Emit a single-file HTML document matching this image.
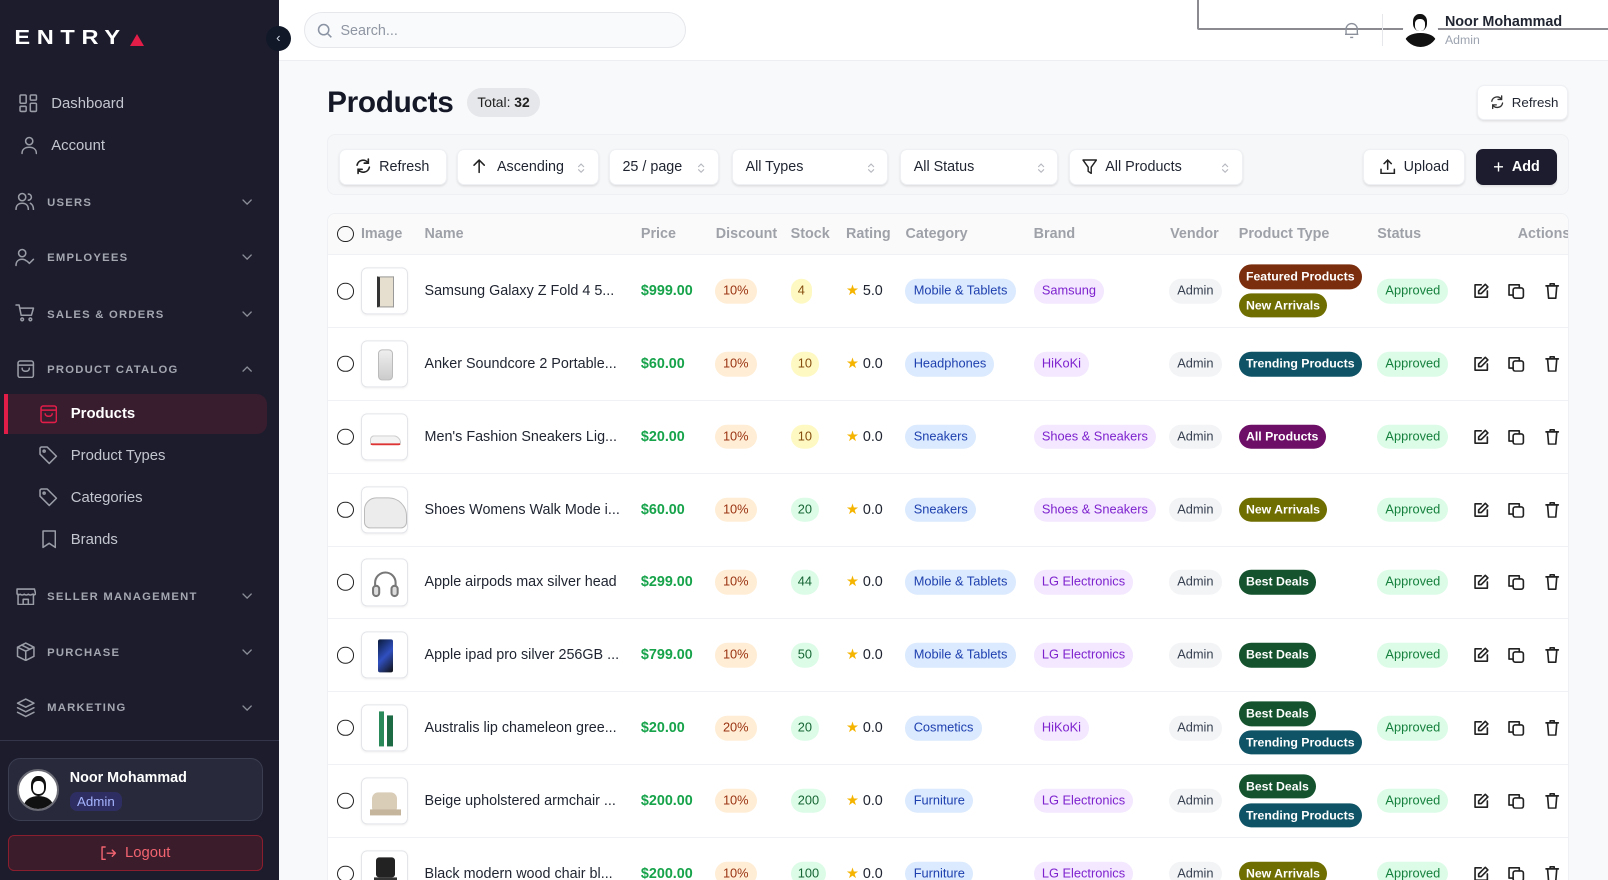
<!DOCTYPE html>
<html style="overflow:hidden"><head><meta charset="utf-8">
<style>
html{zoom:1.02551;overflow:hidden}
*{box-sizing:border-box;margin:0;padding:0}
body{width:1568px;height:858px;overflow:hidden;background:#f8f9fb;font-family:"Liberation Sans",Arial,sans-serif;position:relative;color:#1f2430}
.a{position:absolute}
.sb{left:0;top:0;width:272px;height:858px;background:#1c1c2d}
.logo{left:14px;top:25px;color:#fff;font-weight:900;font-size:23px;letter-spacing:6.5px;transform:scaleY(.85);transform-origin:top left}
.nav{color:#c4c6cf;font-size:14.5px;left:50px}
.sec{color:#a4a6b0;font-size:11px;font-weight:700;letter-spacing:1.2px;left:46px}
.sub{color:#c4c6cf;font-size:14.5px;left:69px}
.ic{stroke:#9a9ca6;fill:none;stroke-width:1.5;stroke-linecap:round;stroke-linejoin:round}
.chev{position:absolute;left:236px}
.hdr{left:272px;top:0;width:1296px;height:59px;background:#fff;border-bottom:1px solid #eceef2}
.btn{background:#fff;border-radius:7px;box-shadow:0 1px 2px rgba(0,0,0,.1);border:1px solid #eef0f3;font-size:14px;color:#1f2430;display:flex;align-items:center;padding-left:14px;height:35px;top:145px}
.ud{position:absolute;right:12px;top:12px}
.tbl{left:319px;top:208px;width:1211px;height:700px;background:#fff;border:1px solid #eef0f3;border-radius:8px;overflow:hidden}
.th{position:absolute;top:11px;font-size:14px;font-weight:700;color:#9ea1a8}
.row{position:absolute;left:0;width:1211px;height:71px;border-top:1px solid #eff1f4}
.row>*{position:absolute;top:50%;transform:translateY(-50%)}
.cb{left:9px;width:16px;height:16px;border:1.5px solid #222;border-radius:50%}
.im{left:32px;width:46px;height:46px;border:1px solid #e3e5e9;border-radius:6px;background:#fff;box-shadow:0 1px 2px rgba(0,0,0,.06)}
.nm{left:94px;font-size:14px;color:#1f2430}
.pr{left:305px;font-size:14px;font-weight:700;color:#16a34a}
.p{font-size:12.5px;border-radius:12px;height:24px;line-height:24px;padding:0 8px;white-space:nowrap}
.ds{left:377px;background:#ffedd5;color:#9a3412}
.sty{background:#fef9c3;color:#854d0e;padding:0 7px}
.stg{background:#dcfce7;color:#166534;padding:0 7px}
.rt{left:505px;font-size:14px;color:#1f2430}
.rt b{color:#f5b400;font-weight:400}
.ct{left:563px;background:#dbeafe;color:#1e40af}
.br{left:688px;background:#f3e8ff;color:#7e22ce}
.vd{left:820px;background:#f3f4f6;color:#374151}
.ptw{left:888px;display:flex;flex-direction:column;gap:4px;align-items:flex-start}
.pt{font-size:12px;font-weight:700;color:#fff;border-radius:12px;height:24px;line-height:24px;padding:0 7px;white-space:nowrap}
.fp{background:#7a2e0e}.na{background:#6f6e00}.tp{background:#0f5466}.ap{background:#6d0f66}.bd{background:#14532d}
.st{left:1023px;background:#dcfce7;color:#15803d}
.ac{stroke:#222;fill:none;stroke-width:1.6;stroke-linecap:round;stroke-linejoin:round}
</style></head><body>
<svg width="0" height="0" style="position:absolute"><defs>
<symbol id="cd" viewBox="0 0 10 6"><path d="M1 1l4 4 4-4" fill="none" stroke="#8a8c96" stroke-width="1.3" stroke-linecap="round"/></symbol>
<symbol id="cu" viewBox="0 0 10 6"><path d="M1 5l4-4 4 4" fill="none" stroke="#8a8c96" stroke-width="1.3" stroke-linecap="round"/></symbol>
<symbol id="ud" viewBox="0 0 8 12"><path d="M1.5 4.5L4 2l2.5 2.5M1.5 7.5L4 10l2.5-2.5" fill="none" stroke="#b5b8bf" stroke-width="1.1" stroke-linecap="round"/></symbol>
</defs></svg>
<div class="a sb">
 <div class="a logo">ENTRY</div>
 <div class="a" style="left:127px;top:33px;width:0;height:0;border-left:7px solid transparent;border-right:7px solid transparent;border-bottom:12px solid #e11d48"></div>
 <svg class="a ic" style="left:19px;top:92px" width="18" height="18" viewBox="0 0 18 18"><rect x="1" y="1" width="6" height="8" rx="1"/><rect x="11" y="1" width="6" height="5" rx="1"/><rect x="1" y="12" width="6" height="5" rx="1"/><rect x="11" y="9" width="6" height="8" rx="1"/></svg>
 <div class="a nav" style="top:94px">Dashboard</div>
 <svg class="a ic" style="left:20px;top:133px" width="16" height="18" viewBox="0 0 16 18"><circle cx="8" cy="5" r="3.5"/><path d="M1 17c0-4 3-6 7-6s7 2 7 6"/></svg>
 <div class="a nav" style="top:135px">Account</div>

 <svg class="a ic" style="left:15px;top:187px" width="20" height="18" viewBox="0 0 20 18"><circle cx="7" cy="5" r="3.5"/><path d="M1 17c0-4 2.5-6 6-6s6 2 6 6M13 2a3 3 0 010 6M15 11c2 1 3 3 3 6"/></svg>
 <div class="a sec" style="top:192px">USERS</div>
 <svg class="chev" style="top:194px" width="10" height="6"><use href="#cd"/></svg>

 <svg class="a ic" style="left:15px;top:242px" width="20" height="18" viewBox="0 0 20 18"><circle cx="7" cy="5" r="3.5"/><path d="M1 17c0-4 2.5-6 6-6 2 0 3 .5 4 1.5M12 13l2 2 4-4"/></svg>
 <div class="a sec" style="top:246px">EMPLOYEES</div>
 <svg class="chev" style="top:248px" width="10" height="6"><use href="#cd"/></svg>

 <svg class="a ic" style="left:15px;top:296px" width="20" height="18" viewBox="0 0 20 18"><path d="M1 1h3l2 10h10l2-7H5"/><circle cx="7" cy="15" r="1.3"/><circle cx="15" cy="15" r="1.3"/></svg>
 <div class="a sec" style="top:301px">SALES &amp; ORDERS</div>
 <svg class="chev" style="top:303px" width="10" height="6"><use href="#cd"/></svg>

 <svg class="a ic" style="left:17px;top:351px" width="17" height="18" viewBox="0 0 17 18"><rect x="1" y="1" width="15" height="16" rx="2"/><path d="M1 5h15M5 8c0 2 1.5 3 3.5 3s3.5-1 3.5-3"/></svg>
 <div class="a sec" style="top:355px">PRODUCT CATALOG</div>
 <svg class="chev" style="top:357px" width="10" height="6"><use href="#cu"/></svg>

 <div class="a" style="left:4px;top:384px;width:256px;height:39px;background:#371d2e;border-radius:0 10px 10px 0"></div>
 <div class="a" style="left:4px;top:384px;width:4px;height:39px;background:#e11d48"></div>
 <svg class="a" style="left:39px;top:395px" width="17" height="18" viewBox="0 0 17 18" fill="none" stroke="#e11d48" stroke-width="1.5"><rect x="1" y="1" width="15" height="16" rx="2"/><path d="M1 5h15M5 8c0 2 1.5 3 3.5 3s3.5-1 3.5-3"/></svg>
 <div class="a sub" style="top:396px;color:#fff;font-weight:700">Products</div>
 <svg class="a ic" style="left:38px;top:435px" width="19" height="19" viewBox="0 0 19 19"><path d="M1 2v6l9 9 7-7-9-9H2z"/><circle cx="5" cy="5" r="1"/></svg>
 <div class="a sub" style="top:437px">Product Types</div>
 <svg class="a ic" style="left:38px;top:476px" width="19" height="19" viewBox="0 0 19 19"><path d="M1 2v6l9 9 7-7-9-9H2z"/><circle cx="5" cy="5" r="1"/></svg>
 <div class="a sub" style="top:478px">Categories</div>
 <svg class="a ic" style="left:41px;top:517px" width="14" height="18" viewBox="0 0 14 18"><path d="M1 1h12v16l-6-4-6 4z"/></svg>
 <div class="a sub" style="top:519px">Brands</div>

 <svg class="a ic" style="left:16px;top:571px" width="19" height="19" viewBox="0 0 19 19"><path d="M2 8v10h15V8M1 3h17l1 4c0 2-2 2-3 1-1 1-3 1-4 0-1 1-3 1-4 0-1 1-3 1-4 0-1 1-3 1-3-1zM7 18v-5h5v5"/></svg>
 <div class="a sec" style="top:576px">SELLER MANAGEMENT</div>
 <svg class="chev" style="top:578px" width="10" height="6"><use href="#cd"/></svg>
 <svg class="a ic" style="left:16px;top:626px" width="19" height="19" viewBox="0 0 19 19"><path d="M9.5 1l8 4v9l-8 4-8-4V5zM1.5 5l8 4 8-4M9.5 9v9M5.5 3l8 4"/></svg>
 <div class="a sec" style="top:631px">PURCHASE</div>
 <svg class="chev" style="top:633px" width="10" height="6"><use href="#cd"/></svg>
 <svg class="a ic" style="left:16px;top:681px" width="19" height="19" viewBox="0 0 19 19"><path d="M9.5 1l8 4-8 4-8-4zM1.5 9.5l8 4 8-4M1.5 14l8 4 8-4"/></svg>
 <div class="a sec" style="top:685px">MARKETING</div>
 <svg class="chev" style="top:687px" width="10" height="6"><use href="#cd"/></svg>

 <div class="a" style="left:0;top:722px;width:272px;height:1px;background:#34354a"></div>
 <div class="a" style="left:8px;top:739px;width:248px;height:62px;background:#282a3b;border:1px solid #3b3d50;border-radius:12px"></div>
 <div class="a" style="left:17px;top:750px;width:41px;height:41px;border-radius:50%;background:#fff;border:2px solid #6b6b75;overflow:hidden">
  <div class="a" style="left:11px;top:5px;width:15px;height:19px;border-radius:45%;background:#111"></div>
  <div class="a" style="left:13px;top:10px;width:11px;height:12px;border-radius:40%;background:#fff"></div>
  <div class="a" style="left:4px;top:24px;width:29px;height:20px;border-radius:50% 50% 0 0;background:#111"></div>
 </div>
 <div class="a" style="left:68px;top:751px;color:#fff;font-weight:700;font-size:14px">Noor Mohammad</div>
 <div class="a" style="left:68px;top:772px;width:51px;height:19px;background:#2f2e63;border-radius:7px;color:#a5b4fc;font-size:13px;text-align:center;line-height:19px">Admin</div>
 <div class="a" style="left:8px;top:814px;width:248px;height:35px;background:#3a1c2a;border:1px solid #8b1e2e;border-radius:6px;color:#f26470;font-size:14.5px;display:flex;align-items:center;justify-content:center;gap:8px"><svg width="16" height="14" viewBox="0 0 16 14" fill="none" stroke="#f26470" stroke-width="1.4" stroke-linecap="round" stroke-linejoin="round"><path d="M5 1H2v12h3M7 7h8M12 4l3 3-3 3"/></svg>Logout</div>
</div>
<div class="a" style="left:259px;top:25px;width:25px;height:25px;border-radius:50%;background:#111827;color:#cbd5e1;text-align:center;line-height:23px;font-size:13px;z-index:3">&#8249;</div>

<div class="a hdr">
 <div class="a" style="left:24px;top:12px;width:373px;height:35px;border-radius:18px;background:#f9fafb;border:1px solid #e5e7eb"></div>
 <svg class="a" style="left:37px;top:22px" width="15" height="15" viewBox="0 0 15 15" fill="none" stroke="#8a93a3" stroke-width="1.5"><circle cx="6.5" cy="6.5" r="5"/><path d="M10.5 10.5l3.5 3.5"/></svg>
 <div class="a" style="left:60px;top:22px;color:#8f96a3;font-size:14px">Search...</div>
 <div class="a" style="left:895px;top:-2px;width:410px;height:31px;border-left:2px solid #8a8a90;border-bottom:2px solid #8a8a90;border-radius:0 0 0 2px"></div>
 <svg class="a" style="left:1039px;top:20px" width="15" height="18" viewBox="0 0 15 18" fill="none" stroke="#8a8f99" stroke-width="1.3"><path d="M2 13V8a5.5 5.5 0 0111 0v5zM1 13h13M6 16h3"/></svg>
 <div class="a" style="left:1076px;top:14px;width:1px;height:31px;background:#e5e7eb"></div>
 <div class="a" style="left:1096px;top:12px;width:34px;height:34px;border-radius:50%;background:#fff;overflow:hidden">
  <div class="a" style="left:10px;top:2px;width:14px;height:16px;border-radius:45%;background:#111"></div>
  <div class="a" style="left:12px;top:7px;width:10px;height:11px;border-radius:40%;background:#fff"></div>
  <div class="a" style="left:2px;top:20px;width:30px;height:16px;border-radius:50% 50% 0 0;background:#111"></div>
 </div>
 <div class="a" style="left:1137px;top:14px;font-size:14px;font-weight:700;color:#1f2430">Noor Mohammad</div>
 <div class="a" style="left:1137px;top:32px;font-size:12px;color:#9ca3af">Admin</div>
</div>

<div class="a" style="left:319px;top:84px;font-size:29px;font-weight:700;color:#151827;letter-spacing:-.3px">Products</div>
<div class="a" style="left:455px;top:86px;width:72px;height:28px;border-radius:14px;background:#e6e7ea;font-size:13.5px;text-align:center;line-height:28px;color:#222">Total: <b>32</b></div>
<div class="a btn" style="left:1440px;top:83px;width:89px;height:34px;font-size:13px;padding-left:12px">
 <svg width="14" height="14" viewBox="0 0 16 16" fill="none" stroke="#333" stroke-width="1.5" stroke-linecap="round"><path d="M2 7a6 6 0 0111-2M14 9a6 6 0 01-11 2M13 1v4H9M3 15v-4h4"/></svg>&nbsp;&nbsp;Refresh</div>

<div class="a" style="left:319px;top:131px;width:1211px;height:59px;background:#f6f7f9;border:1px solid #eef0f3;border-radius:8px"></div>
<div class="a btn" style="left:331px;width:105px"><svg width="16" height="16" viewBox="0 0 16 16" fill="none" stroke="#222" stroke-width="1.6" stroke-linecap="round"><path d="M2 7a6 6 0 0111-2M14 9a6 6 0 01-11 2M13 1v4H9M3 15v-4h4"/></svg>&nbsp;&nbsp;Refresh</div>
<div class="a btn" style="left:446px;width:138px"><svg width="12" height="14" viewBox="0 0 12 14" fill="none" stroke="#222" stroke-width="1.5" stroke-linecap="round"><path d="M6 13V1M1 6l5-5 5 5"/></svg>&nbsp;&nbsp;&nbsp;Ascending<svg class="ud" width="8" height="12"><use href="#ud"/></svg></div>
<div class="a btn" style="left:594px;width:107px;padding-left:12px">25 / page<svg class="ud" width="8" height="12"><use href="#ud"/></svg></div>
<div class="a btn" style="left:714px;width:152px;padding-left:12px">All Types<svg class="ud" width="8" height="12"><use href="#ud"/></svg></div>
<div class="a btn" style="left:878px;width:154px;padding-left:12px">All Status<svg class="ud" width="8" height="12"><use href="#ud"/></svg></div>
<div class="a btn" style="left:1042px;width:170px;padding-left:12px"><svg width="15" height="15" viewBox="0 0 15 15" fill="none" stroke="#222" stroke-width="1.4" stroke-linejoin="round"><path d="M1 1h13L9 8v6l-3-2V8z"/></svg>&nbsp;&nbsp;All Products<svg class="ud" width="8" height="12"><use href="#ud"/></svg></div>
<div class="a btn" style="left:1329px;width:100px;padding-left:16px"><svg width="15" height="15" viewBox="0 0 15 15" fill="none" stroke="#222" stroke-width="1.5" stroke-linecap="round"><path d="M7.5 10V1M4 4.5L7.5 1 11 4.5M1 10v4h13v-4"/></svg>&nbsp;&nbsp;Upload</div>
<div class="a btn" style="left:1439px;width:79px;background:#1c1c2e;border-color:#1c1c2e;color:#fff;font-weight:700;padding-left:16px"><span style="font-size:18px;font-weight:400">+</span>&nbsp;&nbsp;Add</div>

<div class="a tbl">
 <div style="position:absolute;left:0;top:0;width:1211px;height:39px;background:#fafafa"></div>
 <div class="cb" style="position:absolute;top:11px"></div>
 <div class="th" style="left:32px">Image</div><div class="th" style="left:94px">Name</div><div class="th" style="left:305px">Price</div><div class="th" style="left:378px">Discount</div><div class="th" style="left:451px">Stock</div><div class="th" style="left:505px">Rating</div><div class="th" style="left:563px">Category</div><div class="th" style="left:688px">Brand</div><div class="th" style="left:821px">Vendor</div><div class="th" style="left:888px">Product Type</div><div class="th" style="left:1023px">Status</div><div class="th" style="left:1160px">Actions</div>

 <div class="row" style="top:39px"><div class="cb"></div><div class="im"><div class="a" style="left:15px;top:8px;width:16px;height:30px;background:#e6dfcf;border:1px solid #999;border-left:3px solid #333"></div></div><div class="nm">Samsung Galaxy Z Fold 4 5...</div><div class="pr">$999.00</div><div class="p ds">10%</div><div class="p sty" style="left:451px">4</div><div class="rt"><b>★</b> 5.0</div><div class="p ct">Mobile &amp; Tablets</div><div class="p br">Samsung</div><div class="p vd">Admin</div><div class="ptw"><div class="pt fp">Featured Products</div><div class="pt na">New Arrivals</div></div><div class="p st">Approved</div>
  <svg style="left:1116px" width="16" height="16" class="ac" viewBox="0 0 16 16"><path d="M8 2H2v12h12V8M12 1.5l2.5 2.5L8 10.5H5.5V8z"/></svg><svg style="left:1151px" width="16" height="16" class="ac" viewBox="0 0 16 16"><rect x="5" y="5" width="10" height="10" rx="2"/><path d="M11 5V2H1v10h4"/></svg><svg style="left:1187px" width="14" height="16" class="ac" viewBox="0 0 14 16"><path d="M1 3h12M5 3V1h4v2M2.5 3l1 12h7l1-12"/></svg></div>

 <div class="row" style="top:110px"><div class="cb"></div><div class="im"><div class="a" style="left:16px;top:8px;width:14px;height:30px;border-radius:4px;background:linear-gradient(#eee,#ccc);border:1px solid #bbb"></div></div><div class="nm">Anker Soundcore 2 Portable...</div><div class="pr">$60.00</div><div class="p ds">10%</div><div class="p sty" style="left:451px">10</div><div class="rt"><b>★</b> 0.0</div><div class="p ct">Headphones</div><div class="p br">HiKoKi</div><div class="p vd">Admin</div><div class="ptw"><div class="pt tp">Trending Products</div></div><div class="p st">Approved</div>
  <svg style="left:1116px" width="16" height="16" class="ac" viewBox="0 0 16 16"><path d="M8 2H2v12h12V8M12 1.5l2.5 2.5L8 10.5H5.5V8z"/></svg><svg style="left:1151px" width="16" height="16" class="ac" viewBox="0 0 16 16"><rect x="5" y="5" width="10" height="10" rx="2"/><path d="M11 5V2H1v10h4"/></svg><svg style="left:1187px" width="14" height="16" class="ac" viewBox="0 0 14 16"><path d="M1 3h12M5 3V1h4v2M2.5 3l1 12h7l1-12"/></svg></div>

 <div class="row" style="top:181px"><div class="cb"></div><div class="im"><div class="a" style="left:8px;top:21px;width:30px;height:9px;border-radius:5px 9px 3px 3px;background:#f3f3f3;border:1px solid #ccc;border-bottom:2px solid #d33"></div></div><div class="nm">Men's Fashion Sneakers Lig...</div><div class="pr">$20.00</div><div class="p ds">10%</div><div class="p sty" style="left:451px">10</div><div class="rt"><b>★</b> 0.0</div><div class="p ct">Sneakers</div><div class="p br">Shoes &amp; Sneakers</div><div class="p vd">Admin</div><div class="ptw"><div class="pt ap">All Products</div></div><div class="p st">Approved</div>
  <svg style="left:1116px" width="16" height="16" class="ac" viewBox="0 0 16 16"><path d="M8 2H2v12h12V8M12 1.5l2.5 2.5L8 10.5H5.5V8z"/></svg><svg style="left:1151px" width="16" height="16" class="ac" viewBox="0 0 16 16"><rect x="5" y="5" width="10" height="10" rx="2"/><path d="M11 5V2H1v10h4"/></svg><svg style="left:1187px" width="14" height="16" class="ac" viewBox="0 0 14 16"><path d="M1 3h12M5 3V1h4v2M2.5 3l1 12h7l1-12"/></svg></div>

 <div class="row" style="top:252px"><div class="cb"></div><div class="im"><div class="a" style="left:2px;top:10px;width:42px;height:30px;border-radius:12px 18px 6px 6px;background:#ececec;border:1px solid #bbb"></div></div><div class="nm">Shoes Womens Walk Mode i...</div><div class="pr">$60.00</div><div class="p ds">10%</div><div class="p stg" style="left:451px">20</div><div class="rt"><b>★</b> 0.0</div><div class="p ct">Sneakers</div><div class="p br">Shoes &amp; Sneakers</div><div class="p vd">Admin</div><div class="ptw"><div class="pt na">New Arrivals</div></div><div class="p st">Approved</div>
  <svg style="left:1116px" width="16" height="16" class="ac" viewBox="0 0 16 16"><path d="M8 2H2v12h12V8M12 1.5l2.5 2.5L8 10.5H5.5V8z"/></svg><svg style="left:1151px" width="16" height="16" class="ac" viewBox="0 0 16 16"><rect x="5" y="5" width="10" height="10" rx="2"/><path d="M11 5V2H1v10h4"/></svg><svg style="left:1187px" width="14" height="16" class="ac" viewBox="0 0 14 16"><path d="M1 3h12M5 3V1h4v2M2.5 3l1 12h7l1-12"/></svg></div>

 <div class="row" style="top:323px"><div class="cb"></div><div class="im"><svg class="a" style="left:9px;top:9px" width="28" height="28" viewBox="0 0 28 28" fill="none" stroke="#777" stroke-width="2"><path d="M4 18V13a10 10 0 0120 0v5"/><rect x="2" y="16" width="6" height="10" rx="3" fill="#ddd"/><rect x="20" y="16" width="6" height="10" rx="3" fill="#ddd"/></svg></div><div class="nm">Apple airpods max silver head</div><div class="pr">$299.00</div><div class="p ds">10%</div><div class="p stg" style="left:451px">44</div><div class="rt"><b>★</b> 0.0</div><div class="p ct">Mobile &amp; Tablets</div><div class="p br">LG Electronics</div><div class="p vd">Admin</div><div class="ptw"><div class="pt bd">Best Deals</div></div><div class="p st">Approved</div>
  <svg style="left:1116px" width="16" height="16" class="ac" viewBox="0 0 16 16"><path d="M8 2H2v12h12V8M12 1.5l2.5 2.5L8 10.5H5.5V8z"/></svg><svg style="left:1151px" width="16" height="16" class="ac" viewBox="0 0 16 16"><rect x="5" y="5" width="10" height="10" rx="2"/><path d="M11 5V2H1v10h4"/></svg><svg style="left:1187px" width="14" height="16" class="ac" viewBox="0 0 14 16"><path d="M1 3h12M5 3V1h4v2M2.5 3l1 12h7l1-12"/></svg></div>

 <div class="row" style="top:394px"><div class="cb"></div><div class="im"><div class="a" style="left:16px;top:7px;width:14px;height:32px;border-radius:2px;background:linear-gradient(135deg,#0a1a3a,#3050c0,#111)"></div></div><div class="nm">Apple ipad pro silver 256GB ...</div><div class="pr">$799.00</div><div class="p ds">10%</div><div class="p stg" style="left:451px">50</div><div class="rt"><b>★</b> 0.0</div><div class="p ct">Mobile &amp; Tablets</div><div class="p br">LG Electronics</div><div class="p vd">Admin</div><div class="ptw"><div class="pt bd">Best Deals</div></div><div class="p st">Approved</div>
  <svg style="left:1116px" width="16" height="16" class="ac" viewBox="0 0 16 16"><path d="M8 2H2v12h12V8M12 1.5l2.5 2.5L8 10.5H5.5V8z"/></svg><svg style="left:1151px" width="16" height="16" class="ac" viewBox="0 0 16 16"><rect x="5" y="5" width="10" height="10" rx="2"/><path d="M11 5V2H1v10h4"/></svg><svg style="left:1187px" width="14" height="16" class="ac" viewBox="0 0 14 16"><path d="M1 3h12M5 3V1h4v2M2.5 3l1 12h7l1-12"/></svg></div>

 <div class="row" style="top:465px"><div class="cb"></div><div class="im"><div class="a" style="left:17px;top:6px;width:5px;height:34px;background:#2a8a5a"></div><div class="a" style="left:24px;top:10px;width:6px;height:30px;background:#1d6b45"></div></div><div class="nm">Australis lip chameleon gree...</div><div class="pr">$20.00</div><div class="p ds">20%</div><div class="p stg" style="left:451px">20</div><div class="rt"><b>★</b> 0.0</div><div class="p ct">Cosmetics</div><div class="p br">HiKoKi</div><div class="p vd">Admin</div><div class="ptw"><div class="pt bd">Best Deals</div><div class="pt tp">Trending Products</div></div><div class="p st">Approved</div>
  <svg style="left:1116px" width="16" height="16" class="ac" viewBox="0 0 16 16"><path d="M8 2H2v12h12V8M12 1.5l2.5 2.5L8 10.5H5.5V8z"/></svg><svg style="left:1151px" width="16" height="16" class="ac" viewBox="0 0 16 16"><rect x="5" y="5" width="10" height="10" rx="2"/><path d="M11 5V2H1v10h4"/></svg><svg style="left:1187px" width="14" height="16" class="ac" viewBox="0 0 14 16"><path d="M1 3h12M5 3V1h4v2M2.5 3l1 12h7l1-12"/></svg></div>

 <div class="row" style="top:536px"><div class="cb"></div><div class="im"><div class="a" style="left:10px;top:14px;width:24px;height:20px;border-radius:6px;background:#d9cdb8"></div><div class="a" style="left:8px;top:30px;width:30px;height:6px;background:#c4b59c"></div></div><div class="nm">Beige upholstered armchair ...</div><div class="pr">$200.00</div><div class="p ds">10%</div><div class="p stg" style="left:451px">200</div><div class="rt"><b>★</b> 0.0</div><div class="p ct">Furniture</div><div class="p br">LG Electronics</div><div class="p vd">Admin</div><div class="ptw"><div class="pt bd">Best Deals</div><div class="pt tp">Trending Products</div></div><div class="p st">Approved</div>
  <svg style="left:1116px" width="16" height="16" class="ac" viewBox="0 0 16 16"><path d="M8 2H2v12h12V8M12 1.5l2.5 2.5L8 10.5H5.5V8z"/></svg><svg style="left:1151px" width="16" height="16" class="ac" viewBox="0 0 16 16"><rect x="5" y="5" width="10" height="10" rx="2"/><path d="M11 5V2H1v10h4"/></svg><svg style="left:1187px" width="14" height="16" class="ac" viewBox="0 0 14 16"><path d="M1 3h12M5 3V1h4v2M2.5 3l1 12h7l1-12"/></svg></div>

 <div class="row" style="top:607px"><div class="cb"></div><div class="im"><div class="a" style="left:14px;top:6px;width:18px;height:20px;background:#222;border-radius:3px"></div><div class="a" style="left:12px;top:26px;width:22px;height:14px;background:#333"></div></div><div class="nm">Black modern wood chair bl...</div><div class="pr">$200.00</div><div class="p ds">10%</div><div class="p stg" style="left:451px">100</div><div class="rt"><b>★</b> 0.0</div><div class="p ct">Furniture</div><div class="p br">LG Electronics</div><div class="p vd">Admin</div><div class="ptw"><div class="pt na">New Arrivals</div></div><div class="p st">Approved</div>
  <svg style="left:1116px" width="16" height="16" class="ac" viewBox="0 0 16 16"><path d="M8 2H2v12h12V8M12 1.5l2.5 2.5L8 10.5H5.5V8z"/></svg><svg style="left:1151px" width="16" height="16" class="ac" viewBox="0 0 16 16"><rect x="5" y="5" width="10" height="10" rx="2"/><path d="M11 5V2H1v10h4"/></svg><svg style="left:1187px" width="14" height="16" class="ac" viewBox="0 0 14 16"><path d="M1 3h12M5 3V1h4v2M2.5 3l1 12h7l1-12"/></svg></div>
</div>
</body></html>
